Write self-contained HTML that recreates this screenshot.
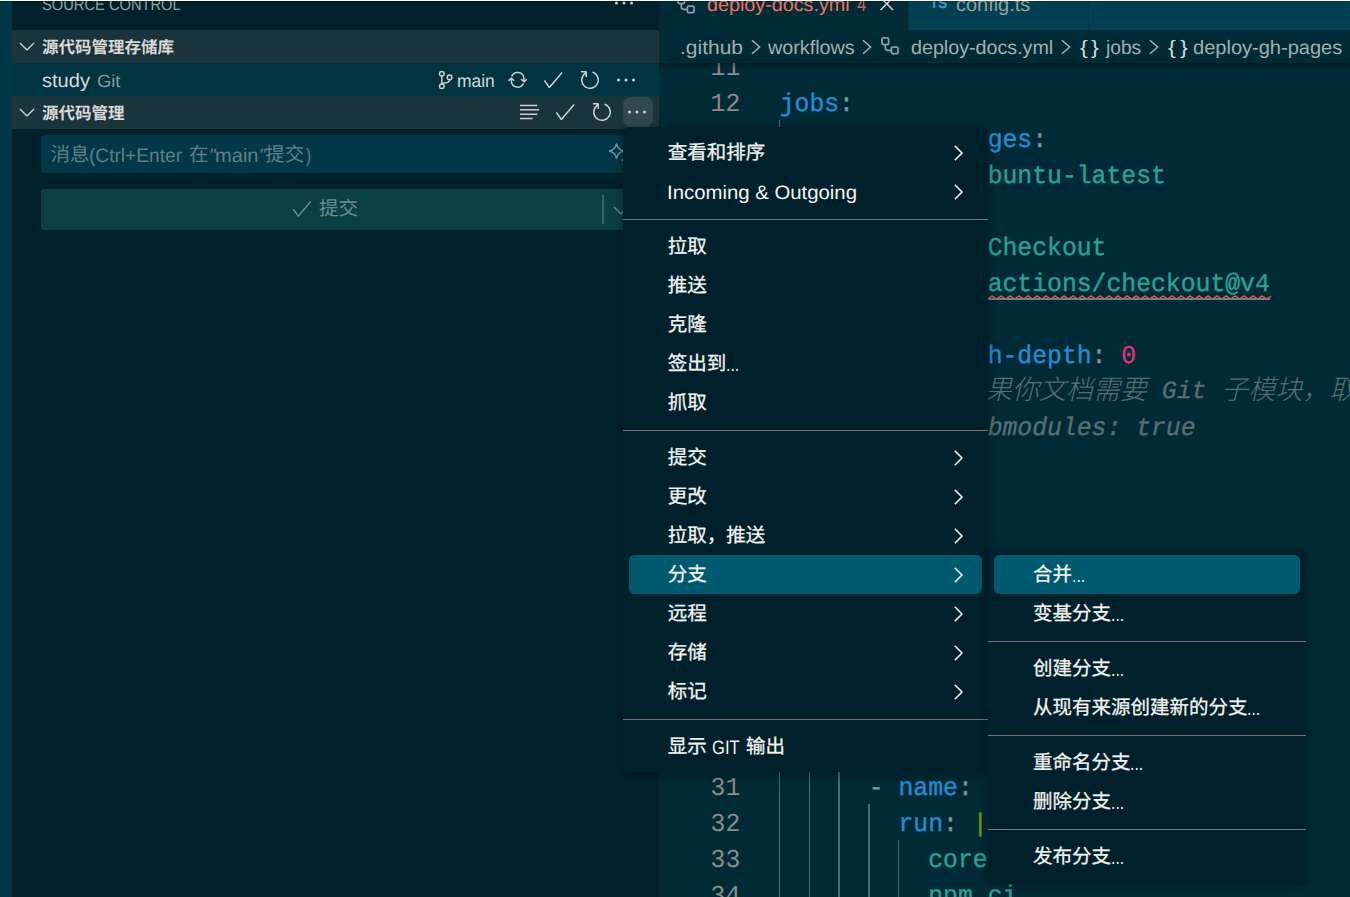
<!DOCTYPE html>
<html lang="zh-CN"><head><meta charset="utf-8"><title>Source Control - Visual Studio Code</title>
<style>
html,body{margin:0;padding:0}
body{width:1350px;height:897px;overflow:hidden;position:relative;background:#002B36;font-family:"Liberation Sans",sans-serif;font-kerning:none;font-variant-ligatures:none;text-rendering:geometricPrecision}
.b,.t,.i,.k{position:absolute}
.t{white-space:pre;line-height:1;transform-origin:0 0}
.i,.k{overflow:visible}
</style></head><body>
<div class="b" style="left:0px;top:0px;width:12px;height:897px;background:#003847;"></div>
<div class="b" style="left:12px;top:0px;width:647px;height:897px;background:#00212B;"></div>
<div class="b" style="left:659px;top:0px;width:691px;height:897px;background:#002B36;"></div>
<div class="b" style="left:778.9px;top:120px;width:1.6px;height:828px;background:#4E6B70;"></div>
<div class="b" style="left:808.6px;top:156px;width:1.6px;height:792px;background:#4E6B70;"></div>
<div class="b" style="left:838.3px;top:228px;width:1.6px;height:720px;background:#4E6B70;"></div>
<div class="b" style="left:868.0px;top:264px;width:1.6px;height:180px;background:#4E6B70;"></div>
<div class="b" style="left:897.7px;top:336px;width:1.6px;height:108px;background:#4E6B70;"></div>
<div class="b" style="left:868.0px;top:804px;width:1.6px;height:144px;background:#4E6B70;"></div>
<div class="b" style="left:897.7px;top:840px;width:1.6px;height:108px;background:#4E6B70;"></div>
<span class="t" style="left:710.59px;top:56.00px;font-size:24.75px;font-family:'Liberation Mono',sans-serif;color:#8A8A8A;transform:scale(1.0000,1.0450);">11</span>
<span class="t" style="left:710.59px;top:92.00px;font-size:24.75px;font-family:'Liberation Mono',sans-serif;color:#8A8A8A;transform:scale(1.0000,1.0450);">12</span>
<span class="t" style="left:710.59px;top:776.00px;font-size:24.75px;font-family:'Liberation Mono',sans-serif;color:#8A8A8A;transform:scale(1.0000,1.0450);">31</span>
<span class="t" style="left:710.59px;top:812.00px;font-size:24.75px;font-family:'Liberation Mono',sans-serif;color:#8A8A8A;transform:scale(1.0000,1.0450);">32</span>
<span class="t" style="left:710.59px;top:848.00px;font-size:24.75px;font-family:'Liberation Mono',sans-serif;color:#8A8A8A;transform:scale(1.0000,1.0450);">33</span>
<span class="t" style="left:710.59px;top:884.00px;font-size:24.75px;font-family:'Liberation Mono',sans-serif;color:#8A8A8A;transform:scale(1.0000,1.0450);">34</span>
<span class="t" style="left:779.70px;top:92.00px;font-size:24.75px;font-family:'Liberation Mono',sans-serif;color:#268BD2;transform:scale(1.0000,1.0350);-webkit-text-stroke:0.35px #268BD2;">jobs</span>
<span class="t" style="left:839.11px;top:92.00px;font-size:24.75px;font-family:'Liberation Mono',sans-serif;color:#839496;transform:scale(1.0000,1.0350);-webkit-text-stroke:0.35px #839496;">:</span>
<span class="t" style="left:809.41px;top:128.00px;font-size:24.75px;font-family:'Liberation Mono',sans-serif;color:#268BD2;transform:scale(1.0000,1.0350);-webkit-text-stroke:0.35px #268BD2;">deploy-gh-pages</span>
<span class="t" style="left:1032.20px;top:128.00px;font-size:24.75px;font-family:'Liberation Mono',sans-serif;color:#839496;transform:scale(1.0000,1.0350);-webkit-text-stroke:0.35px #839496;">:</span>
<span class="t" style="left:839.11px;top:164.00px;font-size:24.75px;font-family:'Liberation Mono',sans-serif;color:#268BD2;transform:scale(1.0000,1.0350);-webkit-text-stroke:0.35px #268BD2;">runs-on</span>
<span class="t" style="left:943.08px;top:164.00px;font-size:24.75px;font-family:'Liberation Mono',sans-serif;color:#839496;transform:scale(1.0000,1.0350);-webkit-text-stroke:0.35px #839496;">:</span>
<span class="t" style="left:972.79px;top:164.00px;font-size:24.75px;font-family:'Liberation Mono',sans-serif;color:#2AA198;transform:scale(1.0000,1.0350);-webkit-text-stroke:0.35px #2AA198;">ubuntu-latest</span>
<span class="t" style="left:868.82px;top:236.00px;font-size:24.75px;font-family:'Liberation Mono',sans-serif;color:#839496;transform:scale(1.0000,1.0350);-webkit-text-stroke:0.35px #839496;">-</span>
<span class="t" style="left:898.52px;top:236.00px;font-size:24.75px;font-family:'Liberation Mono',sans-serif;color:#268BD2;transform:scale(1.0000,1.0350);-webkit-text-stroke:0.35px #268BD2;">name</span>
<span class="t" style="left:957.94px;top:236.00px;font-size:24.75px;font-family:'Liberation Mono',sans-serif;color:#839496;transform:scale(1.0000,1.0350);-webkit-text-stroke:0.35px #839496;">:</span>
<span class="t" style="left:987.64px;top:236.00px;font-size:24.75px;font-family:'Liberation Mono',sans-serif;color:#2AA198;transform:scale(1.0000,1.0350);-webkit-text-stroke:0.35px #2AA198;">Checkout</span>
<span class="t" style="left:898.52px;top:272.00px;font-size:24.75px;font-family:'Liberation Mono',sans-serif;color:#268BD2;transform:scale(1.0000,1.0350);-webkit-text-stroke:0.35px #268BD2;">uses</span>
<span class="t" style="left:957.94px;top:272.00px;font-size:24.75px;font-family:'Liberation Mono',sans-serif;color:#839496;transform:scale(1.0000,1.0350);-webkit-text-stroke:0.35px #839496;">:</span>
<span class="t" style="left:987.64px;top:272.00px;font-size:24.75px;font-family:'Liberation Mono',sans-serif;color:#2AA198;transform:scale(1.0000,1.0350);-webkit-text-stroke:0.35px #2AA198;">actions/checkout@v4</span>
<span class="t" style="left:898.52px;top:308.00px;font-size:24.75px;font-family:'Liberation Mono',sans-serif;color:#268BD2;transform:scale(1.0000,1.0350);-webkit-text-stroke:0.35px #268BD2;">with</span>
<span class="t" style="left:957.94px;top:308.00px;font-size:24.75px;font-family:'Liberation Mono',sans-serif;color:#839496;transform:scale(1.0000,1.0350);-webkit-text-stroke:0.35px #839496;">:</span>
<span class="t" style="left:928.23px;top:344.00px;font-size:24.75px;font-family:'Liberation Mono',sans-serif;color:#268BD2;transform:scale(1.0000,1.0350);-webkit-text-stroke:0.35px #268BD2;">fetch-depth</span>
<span class="t" style="left:1091.61px;top:344.00px;font-size:24.75px;font-family:'Liberation Mono',sans-serif;color:#839496;transform:scale(1.0000,1.0350);-webkit-text-stroke:0.35px #839496;">:</span>
<span class="t" style="left:1121.32px;top:344.00px;font-size:24.75px;font-family:'Liberation Mono',sans-serif;color:#D33682;transform:scale(1.0000,1.0350);-webkit-text-stroke:0.35px #D33682;">0</span>
<span class="t" style="left:928.23px;top:380.00px;font-size:24.75px;font-family:'Liberation Mono',sans-serif;color:#586E75;transform:scale(1.0000,1.0350);font-style:italic;-webkit-text-stroke:0.35px #586E75;">#</span>
<span class="t" style="left:957.94px;top:377.10px;font-size:27px;font-family:'Liberation Sans','Noto Sans CJK SC',sans-serif;font-weight:300;font-style:italic;color:#586E75;">如果你文档需要</span>
<span class="t" style="left:1161.79px;top:380.00px;font-size:24.75px;font-family:'Liberation Mono',sans-serif;color:#586E75;transform:scaleX(1.0000);font-style:italic;-webkit-text-stroke:0.35px #586E75;">Git</span>
<span class="t" style="left:1221.20px;top:377.10px;font-size:27px;font-family:'Liberation Sans','Noto Sans CJK SC',sans-serif;font-weight:300;font-style:italic;color:#586E75;">子模块，取</span>
<span class="t" style="left:928.23px;top:416.00px;font-size:24.75px;font-family:'Liberation Mono',sans-serif;color:#586E75;transform:scale(1.0000,1.0350);font-style:italic;-webkit-text-stroke:0.35px #586E75;"># submodules: true</span>
<span class="t" style="left:868.82px;top:776.00px;font-size:24.75px;font-family:'Liberation Mono',sans-serif;color:#839496;transform:scale(1.0000,1.0350);-webkit-text-stroke:0.35px #839496;">-</span>
<span class="t" style="left:898.52px;top:776.00px;font-size:24.75px;font-family:'Liberation Mono',sans-serif;color:#268BD2;transform:scale(1.0000,1.0350);-webkit-text-stroke:0.35px #268BD2;">name</span>
<span class="t" style="left:957.94px;top:776.00px;font-size:24.75px;font-family:'Liberation Mono',sans-serif;color:#839496;transform:scale(1.0000,1.0350);-webkit-text-stroke:0.35px #839496;">:</span>
<span class="t" style="left:898.52px;top:812.00px;font-size:24.75px;font-family:'Liberation Mono',sans-serif;color:#268BD2;transform:scale(1.0000,1.0350);-webkit-text-stroke:0.35px #268BD2;">run</span>
<span class="t" style="left:943.08px;top:812.00px;font-size:24.75px;font-family:'Liberation Mono',sans-serif;color:#839496;transform:scale(1.0000,1.0350);-webkit-text-stroke:0.35px #839496;">:</span>
<span class="t" style="left:972.79px;top:812.00px;font-size:24.75px;font-family:'Liberation Mono',sans-serif;color:#859900;transform:scale(1.0000,1.0350);-webkit-text-stroke:0.35px #859900;">|</span>
<span class="t" style="left:928.23px;top:848.00px;font-size:24.75px;font-family:'Liberation Mono',sans-serif;color:#2AA198;transform:scale(1.0000,1.0350);-webkit-text-stroke:0.35px #2AA198;">corepack enable</span>
<span class="t" style="left:928.23px;top:884.00px;font-size:24.75px;font-family:'Liberation Mono',sans-serif;color:#2AA198;transform:scale(1.0000,1.0350);-webkit-text-stroke:0.35px #2AA198;">npm ci</span>
<div class="b" style="left:987.6px;top:298.2px;width:282.2px;height:1.6px;background:#2AA198;"></div>
<svg class="i" style="left:0;top:0;width:1350px;height:897px" viewBox="0 0 1350 897"><path d="M987.6 299 L992.1 296 L996.6 299 L1001.1 296 L1005.6 299 L1010.1 296 L1014.6 299 L1019.1 296 L1023.6 299 L1028.1 296 L1032.6 299 L1037.1 296 L1041.6 299 L1046.1 296 L1050.6 299 L1055.1 296 L1059.6 299 L1064.1 296 L1068.6 299 L1073.1 296 L1077.6 299 L1082.1 296 L1086.6 299 L1091.1 296 L1095.6 299 L1100.1 296 L1104.6 299 L1109.1 296 L1113.6 299 L1118.1 296 L1122.6 299 L1127.1 296 L1131.6 299 L1136.1 296 L1140.6 299 L1145.1 296 L1149.6 299 L1154.1 296 L1158.6 299 L1163.1 296 L1167.6 299 L1172.1 296 L1176.6 299 L1181.1 296 L1185.6 299 L1190.1 296 L1194.6 299 L1199.1 296 L1203.6 299 L1208.1 296 L1212.6 299 L1217.1 296 L1221.6 299 L1226.1 296 L1230.6 299 L1235.1 296 L1239.6 299 L1244.1 296 L1248.6 299 L1253.1 296 L1257.6 299 L1262.1 296 L1266.6 299 L1271.1 296" fill="none" stroke="#F2484C" stroke-width="1.5"/></svg>
<div class="b" style="left:659px;top:0px;width:691px;height:30px;background:#004052;"></div>
<div class="b" style="left:659px;top:0px;width:249px;height:30px;background:#002B37;"></div>
<div class="b" style="left:908px;top:0px;width:1px;height:30px;background:#003847;"></div>
<div class="b" style="left:1088px;top:0px;width:1px;height:30px;background:#003847;"></div>
<div class="b" style="left:659px;top:30px;width:691px;height:33px;background:#002B36;"></div>
<div class="b" style="left:659px;top:63px;width:691px;height:7px;background:linear-gradient(rgba(0,0,0,.38),rgba(0,0,0,0));"></div>
<svg class="i" style="left:677.1px;top:-4.0px;width:18px;height:18px;" viewBox="0 0 18 18"><g fill="none" stroke="#8E9CA8" stroke-width="1.75"><rect x="1" y="0.9" width="6.6" height="6.6" rx="1.4"/><rect x="10.4" y="10" width="6.6" height="6.6" rx="1.4"/><path d="M4.3 7.5v3.6a2.2 2.2 0 0 0 2.2 2.2h3.9"/></g></svg>
<span class="t" style="left:706.97px;top:-4.00px;font-size:19.5px;font-family:'Liberation Sans',sans-serif;color:#F0705F;transform:scaleX(1.0125);">deploy-docs.yml</span>
<span class="t" style="left:857.02px;top:-4.00px;font-size:19.5px;font-family:'Liberation Sans',sans-serif;color:#C9665B;transform:scaleX(0.8447);">4</span>
<svg class="i" style="left:879.3px;top:-3.6px;width:16px;height:16px;" viewBox="0 0 16 16"><path d="M1.6 1.6L14 14M14 1.6L1.6 14" stroke="#D6DBDB" stroke-width="1.5" fill="none"/></svg>
<span class="t" style="left:929.95px;top:-3.00px;font-size:14.5px;font-family:'Liberation Sans',sans-serif;font-weight:700;color:#4A97C6;transform:scaleX(0.9270);">TS</span>
<span class="t" style="left:956.45px;top:-4.00px;font-size:19.5px;font-family:'Liberation Sans',sans-serif;color:#93A1A1;transform:scaleX(1.0227);">config.ts</span>
<span class="t" style="left:680.48px;top:39.00px;font-size:19.5px;font-family:'Liberation Sans',sans-serif;color:#A3AFAF;transform:scaleX(1.0760);">.github</span>
<svg class="i" style="left:751px;top:38.5px;width:10px;height:16px;" viewBox="0 0 10 16"><path d="M1 1.2L8.6 8 1 14.8" fill="none" stroke="#A3AFAF" stroke-width="1.5"/></svg>
<span class="t" style="left:767.53px;top:39.00px;font-size:19.5px;font-family:'Liberation Sans',sans-serif;color:#A3AFAF;transform:scaleX(1.0127);">workflows</span>
<svg class="i" style="left:862px;top:38.5px;width:10px;height:16px;" viewBox="0 0 10 16"><path d="M1 1.2L8.6 8 1 14.8" fill="none" stroke="#A3AFAF" stroke-width="1.5"/></svg>
<svg class="i" style="left:880.8px;top:37px;width:18px;height:18px;" viewBox="0 0 18 18"><g fill="none" stroke="#8E9CA8" stroke-width="1.75"><rect x="1" y="0.9" width="6.6" height="6.6" rx="1.4"/><rect x="10.4" y="10" width="6.6" height="6.6" rx="1.4"/><path d="M4.3 7.5v3.6a2.2 2.2 0 0 0 2.2 2.2h3.9"/></g></svg>
<span class="t" style="left:910.77px;top:39.00px;font-size:19.5px;font-family:'Liberation Sans',sans-serif;color:#A3AFAF;transform:scaleX(1.0096);">deploy-docs.yml</span>
<svg class="i" style="left:1061px;top:38.5px;width:10px;height:16px;" viewBox="0 0 10 16"><path d="M1 1.2L8.6 8 1 14.8" fill="none" stroke="#A3AFAF" stroke-width="1.5"/></svg>
<span class="t" style="left:1079.91px;top:39.00px;font-size:19.5px;font-family:'Liberation Sans',sans-serif;color:#D6D6D6;transform:scaleX(1.1974);">{</span>
<span class="t" style="left:1091.41px;top:39.00px;font-size:19.5px;font-family:'Liberation Sans',sans-serif;color:#D6D6D6;transform:scaleX(1.1993);">}</span>
<span class="t" style="left:1106.17px;top:39.00px;font-size:19.5px;font-family:'Liberation Sans',sans-serif;color:#A3AFAF;transform:scaleX(0.9847);">jobs</span>
<svg class="i" style="left:1149px;top:38.5px;width:10px;height:16px;" viewBox="0 0 10 16"><path d="M1 1.2L8.6 8 1 14.8" fill="none" stroke="#A3AFAF" stroke-width="1.5"/></svg>
<span class="t" style="left:1168.11px;top:39.00px;font-size:19.5px;font-family:'Liberation Sans',sans-serif;color:#D6D6D6;transform:scaleX(1.1974);">{</span>
<span class="t" style="left:1179.61px;top:39.00px;font-size:19.5px;font-family:'Liberation Sans',sans-serif;color:#D6D6D6;transform:scaleX(1.1993);">}</span>
<span class="t" style="left:1193.16px;top:39.00px;font-size:19.5px;font-family:'Liberation Sans',sans-serif;color:#A3AFAF;transform:scaleX(1.0275);">deploy-gh-pages</span>
<span class="t" style="left:41.93px;top:-3.00px;font-size:16.5px;font-family:'Liberation Sans',sans-serif;color:#93A1A1;transform:scaleX(0.8897);">SOURCE CONTROL</span>
<svg class="i" style="left:612.3px;top:-9.0px;width:24.0px;height:24.0px;" viewBox="0 0 16 16"><path fill="#CFCFCF" d="M4 8a1 1 0 1 1-2 0 1 1 0 0 1 2 0zm5 0a1 1 0 1 1-2 0 1 1 0 0 1 2 0zm5 0a1 1 0 1 1-2 0 1 1 0 0 1 2 0z"/></svg>
<div class="b" style="left:12px;top:30px;width:647px;height:33px;background:#1A343C;"></div>
<svg class="i" style="left:15px;top:33.6px;width:24.0px;height:24.0px;" viewBox="0 0 16 16"><path fill="#CFCFCF" d="M7.976 10.072l4.357-4.357.62.618L8.284 11h-.618L3 6.333l.619-.618 4.357 4.357z"/></svg>
<span class="t" style="left:42.00px;top:39.80px;font-size:16.5px;font-family:'Liberation Sans','Noto Sans CJK SC',sans-serif;font-weight:700;color:#D8D8D8;">源代码管理存储库</span>
<div class="b" style="left:12px;top:63px;width:647px;height:33px;background:#003441;"></div>
<span class="t" style="left:41.74px;top:72.00px;font-size:19.5px;font-family:'Liberation Sans',sans-serif;color:#D8D8D8;transform:scaleX(1.0298);">study</span>
<span class="t" style="left:96.78px;top:73.00px;font-size:17.5px;font-family:'Liberation Sans',sans-serif;color:#8A9A9C;transform:scaleX(1.0490);">Git</span>
<svg class="i" style="left:437px;top:70px;width:17px;height:20px;" viewBox="0 0 17 20"><g fill="none" stroke="#CFCFCF" stroke-width="1.5"><circle cx="4.8" cy="3.8" r="2.3"/><circle cx="4.8" cy="16.2" r="2.3"/><circle cx="12.6" cy="7.4" r="2.3"/><path d="M4.8 6.1v7.8"/><path d="M12.6 9.7c0 2.6-2.4 3-5 3.2-1.6.1-2.8.5-2.8 1.4"/></g></svg>
<span class="t" style="left:456.94px;top:72.00px;font-size:18px;font-family:'Liberation Sans',sans-serif;color:#D8D8D8;transform:scaleX(0.9686);">main</span>
<svg class="i" style="left:507px;top:71px;width:22px;height:18px;" viewBox="0 0 22 18"><g fill="none" stroke="#CFCFCF" stroke-width="1.45" stroke-linejoin="miter"><path d="M4.7 5.6A6.3 6.3 0 0 1 16.9 7.6L17.2 10.4"/><path d="M14 8.1L17.2 10.7 19.8 8.3"/><path d="M16.5 12.3A6.3 6.3 0 0 1 4.4 10.2L4.4 7.4"/><path d="M1.4 9.7L4.4 7.1 7.2 9.7"/></g></svg>
<svg class="i" style="left:541.0px;top:67.8px;width:24.0px;height:24.0px;" viewBox="0 0 16 16"><path fill="#CFCFCF" d="M14.431 3.323l-8.47 10-.79-.036-3.35-4.77.818-.574 2.978 4.24 8.051-9.506.764.646z"/></svg>
<svg class="i" style="left:577.5px;top:68px;width:24.0px;height:24.0px;" viewBox="0 0 16 16"><path fill="#CFCFCF" d="M4.681 3H2V2h3.5l.5.5V6H5V4a5 5 0 1 0 4.53-.761l.302-.954A6 6 0 1 1 4.681 3z"/></svg>
<svg class="i" style="left:613.6px;top:67.9px;width:24.0px;height:24.0px;" viewBox="0 0 16 16"><path fill="#CFCFCF" d="M4 8a1 1 0 1 1-2 0 1 1 0 0 1 2 0zm5 0a1 1 0 1 1-2 0 1 1 0 0 1 2 0zm5 0a1 1 0 1 1-2 0 1 1 0 0 1 2 0z"/></svg>
<div class="b" style="left:12px;top:96px;width:647px;height:33px;background:#1A343C;"></div>
<svg class="i" style="left:15px;top:99.6px;width:24.0px;height:24.0px;" viewBox="0 0 16 16"><path fill="#CFCFCF" d="M7.976 10.072l4.357-4.357.62.618L8.284 11h-.618L3 6.333l.619-.618 4.357 4.357z"/></svg>
<span class="t" style="left:42.00px;top:105.80px;font-size:16.5px;font-family:'Liberation Sans','Noto Sans CJK SC',sans-serif;font-weight:700;color:#D8D8D8;">源代码管理</span>
<svg class="i" style="left:519px;top:103px;width:21px;height:18px;" viewBox="0 0 21 18"><g stroke="#CFCFCF" stroke-width="1.5"><path d="M1 2.4h17.2M1 6.8h19M1 11.2h17.2M1 15.6h12.6"/></g></svg>
<svg class="i" style="left:553.1px;top:99.8px;width:24.0px;height:24.0px;" viewBox="0 0 16 16"><path fill="#CFCFCF" d="M14.431 3.323l-8.47 10-.79-.036-3.35-4.77.818-.574 2.978 4.24 8.051-9.506.764.646z"/></svg>
<svg class="i" style="left:589.9px;top:100px;width:24.0px;height:24.0px;" viewBox="0 0 16 16"><path fill="#CFCFCF" d="M4.681 3H2V2h3.5l.5.5V6H5V4a5 5 0 1 0 4.53-.761l.302-.954A6 6 0 1 1 4.681 3z"/></svg>
<div class="b" style="left:623px;top:97px;width:30px;height:30px;background:#30474E;border-radius:7.5px;"></div>
<svg class="i" style="left:625.2px;top:100.0px;width:24.0px;height:24.0px;" viewBox="0 0 16 16"><path fill="#CFCFCF" d="M4 8a1 1 0 1 1-2 0 1 1 0 0 1 2 0zm5 0a1 1 0 1 1-2 0 1 1 0 0 1 2 0zm5 0a1 1 0 1 1-2 0 1 1 0 0 1 2 0z"/></svg>
<div class="b" style="left:41px;top:135px;width:600px;height:38px;background:#003847;border-radius:3px;"></div>
<span class="t" style="left:50.40px;top:145.90px;font-size:19.5px;font-family:'Liberation Sans','Noto Sans CJK SC',sans-serif;color:#627E83;">消息</span>
<span class="t" style="left:89.41px;top:147.00px;font-size:19.5px;font-family:'Liberation Sans',sans-serif;color:#627E83;transform:scaleX(0.9809);">(Ctrl+Enter</span>
<span class="t" style="left:189.00px;top:145.90px;font-size:19.5px;font-family:'Liberation Sans','Noto Sans CJK SC',sans-serif;color:#627E83;">在</span>
<span class="t" style="left:209.01px;top:147.00px;font-size:19.5px;font-family:'Liberation Sans',sans-serif;color:#627E83;transform:scaleX(0.9496);font-style:italic;">"</span>
<span class="t" style="left:215.17px;top:147.00px;font-size:19.5px;font-family:'Liberation Sans',sans-serif;color:#627E83;transform:scaleX(1.0301);">main</span>
<span class="t" style="left:258.61px;top:147.00px;font-size:19.5px;font-family:'Liberation Sans',sans-serif;color:#627E83;transform:scaleX(0.9496);font-style:italic;">"</span>
<span class="t" style="left:265.30px;top:145.90px;font-size:19.5px;font-family:'Liberation Sans','Noto Sans CJK SC',sans-serif;color:#627E83;">提交</span>
<span class="t" style="left:305.51px;top:147.00px;font-size:19.5px;font-family:'Liberation Sans',sans-serif;color:#627E83;transform:scaleX(0.7737);">)</span>
<svg class="i" style="left:607px;top:142px;width:20px;height:22px;" viewBox="0 0 20 22"><g fill="none" stroke="#7C979C" stroke-width="1.4"><path d="M9.5 1.4c.7 4.4 2.3 6.6 7.4 7.6-5.100 1-6.700 3.200-7.400 7.600-.7-4.400-2.300-6.600-7.400-7.600 5.100-1 6.700-3.200 7.400-7.600z"/><path fill="#7C979C" stroke="none" d="M16.2 15.600c.3 1.500.8 2.100 2.400 2.400-1.600.3-2.100.9-2.400 2.400-.3-1.500-.8-2.100-2.400-2.400 1.600-.3 2.100-.9 2.400-2.400z"/></g></svg>
<div class="b" style="left:41px;top:189px;width:600px;height:41px;background:#0A4045;border-radius:3px;"></div>
<svg class="i" style="left:290px;top:197.3px;width:23.6px;height:23.6px;" viewBox="0 0 16 16"><path fill="#6A8B90" d="M14.431 3.323l-8.47 10-.79-.036-3.35-4.77.818-.574 2.978 4.24 8.051-9.506.764.646z"/></svg>
<span class="t" style="left:319.00px;top:200.00px;font-size:19.5px;font-family:'Liberation Sans','Noto Sans CJK SC',sans-serif;color:#6A8B90;">提交</span>
<div class="b" style="left:602.4px;top:195px;width:1.4px;height:29px;background:#3A6166;"></div>
<svg class="i" style="left:609px;top:198px;width:24.0px;height:24.0px;" viewBox="0 0 16 16"><path fill="#6A8B90" d="M7.976 10.072l4.357-4.357.62.618L8.284 11h-.618L3 6.333l.619-.618 4.357 4.357z"/></svg>
<div class="b" style="left:623px;top:127px;width:365px;height:645px;background:#00212B;box-shadow:0 3px 12px rgba(0,0,0,.36);border-radius:7px;"></div>
<span class="t" style="left:667.70px;top:144.00px;font-size:19.5px;font-family:'Liberation Sans','Noto Sans CJK SC',sans-serif;color:#F4F4F4;-webkit-text-stroke:0.27px #F4F4F4;">查看和排序</span>
<svg class="i" style="left:946.0px;top:141.0px;width:24.0px;height:24.0px;stroke:#F4F4F4;stroke-width:.22;" viewBox="0 0 16 16"><path fill="#F4F4F4" d="M10.072 8.024L5.715 3.667l.618-.62L11 7.716v.618L6.333 13l-.618-.619 4.357-4.357z"/></svg>
<span class="t" style="left:667.42px;top:184.00px;font-size:19.5px;font-family:'Liberation Sans',sans-serif;color:#F4F4F4;transform:scaleX(1.0433);">Incoming &amp; Outgoing</span>
<svg class="i" style="left:946.0px;top:180.0px;width:24.0px;height:24.0px;stroke:#F4F4F4;stroke-width:.22;" viewBox="0 0 16 16"><path fill="#F4F4F4" d="M10.072 8.024L5.715 3.667l.618-.62L11 7.716v.618L6.333 13l-.618-.619 4.357-4.357z"/></svg>
<div class="b" style="left:623px;top:219px;width:365px;height:1px;background:#757575;"></div>
<span class="t" style="left:667.70px;top:238.00px;font-size:19.5px;font-family:'Liberation Sans','Noto Sans CJK SC',sans-serif;color:#F4F4F4;-webkit-text-stroke:0.27px #F4F4F4;">拉取</span>
<span class="t" style="left:667.70px;top:277.00px;font-size:19.5px;font-family:'Liberation Sans','Noto Sans CJK SC',sans-serif;color:#F4F4F4;-webkit-text-stroke:0.27px #F4F4F4;">推送</span>
<span class="t" style="left:667.70px;top:316.00px;font-size:19.5px;font-family:'Liberation Sans','Noto Sans CJK SC',sans-serif;color:#F4F4F4;-webkit-text-stroke:0.27px #F4F4F4;">克隆</span>
<span class="t" style="left:667.70px;top:355.00px;font-size:19.5px;font-family:'Liberation Sans','Noto Sans CJK SC',sans-serif;color:#F4F4F4;-webkit-text-stroke:0.27px #F4F4F4;">签出到</span>
<span class="t" style="left:726.06px;top:356.00px;font-size:19.5px;font-family:'Liberation Sans',sans-serif;color:#F4F4F4;transform:scaleX(0.8115);">...</span>
<span class="t" style="left:667.70px;top:394.00px;font-size:19.5px;font-family:'Liberation Sans','Noto Sans CJK SC',sans-serif;color:#F4F4F4;-webkit-text-stroke:0.27px #F4F4F4;">抓取</span>
<div class="b" style="left:623px;top:430px;width:365px;height:1px;background:#757575;"></div>
<span class="t" style="left:667.70px;top:449.00px;font-size:19.5px;font-family:'Liberation Sans','Noto Sans CJK SC',sans-serif;color:#F4F4F4;-webkit-text-stroke:0.27px #F4F4F4;">提交</span>
<svg class="i" style="left:946.0px;top:446.0px;width:24.0px;height:24.0px;stroke:#F4F4F4;stroke-width:.22;" viewBox="0 0 16 16"><path fill="#F4F4F4" d="M10.072 8.024L5.715 3.667l.618-.62L11 7.716v.618L6.333 13l-.618-.619 4.357-4.357z"/></svg>
<span class="t" style="left:667.70px;top:488.00px;font-size:19.5px;font-family:'Liberation Sans','Noto Sans CJK SC',sans-serif;color:#F4F4F4;-webkit-text-stroke:0.27px #F4F4F4;">更改</span>
<svg class="i" style="left:946.0px;top:485.0px;width:24.0px;height:24.0px;stroke:#F4F4F4;stroke-width:.22;" viewBox="0 0 16 16"><path fill="#F4F4F4" d="M10.072 8.024L5.715 3.667l.618-.62L11 7.716v.618L6.333 13l-.618-.619 4.357-4.357z"/></svg>
<span class="t" style="left:667.70px;top:527.00px;font-size:19.5px;font-family:'Liberation Sans','Noto Sans CJK SC',sans-serif;color:#F4F4F4;-webkit-text-stroke:0.27px #F4F4F4;">拉取，推送</span>
<svg class="i" style="left:946.0px;top:524.0px;width:24.0px;height:24.0px;stroke:#F4F4F4;stroke-width:.22;" viewBox="0 0 16 16"><path fill="#F4F4F4" d="M10.072 8.024L5.715 3.667l.618-.62L11 7.716v.618L6.333 13l-.618-.619 4.357-4.357z"/></svg>
<div class="b" style="left:629px;top:555px;width:353px;height:39px;background:#005A6F;border-radius:5.5px;"></div>
<span class="t" style="left:667.70px;top:566.00px;font-size:19.5px;font-family:'Liberation Sans','Noto Sans CJK SC',sans-serif;color:#F4F4F4;-webkit-text-stroke:0.27px #F4F4F4;">分支</span>
<svg class="i" style="left:946.0px;top:563.0px;width:24.0px;height:24.0px;stroke:#F4F4F4;stroke-width:.22;" viewBox="0 0 16 16"><path fill="#F4F4F4" d="M10.072 8.024L5.715 3.667l.618-.62L11 7.716v.618L6.333 13l-.618-.619 4.357-4.357z"/></svg>
<span class="t" style="left:667.70px;top:605.00px;font-size:19.5px;font-family:'Liberation Sans','Noto Sans CJK SC',sans-serif;color:#F4F4F4;-webkit-text-stroke:0.27px #F4F4F4;">远程</span>
<svg class="i" style="left:946.0px;top:602.0px;width:24.0px;height:24.0px;stroke:#F4F4F4;stroke-width:.22;" viewBox="0 0 16 16"><path fill="#F4F4F4" d="M10.072 8.024L5.715 3.667l.618-.62L11 7.716v.618L6.333 13l-.618-.619 4.357-4.357z"/></svg>
<span class="t" style="left:667.70px;top:644.00px;font-size:19.5px;font-family:'Liberation Sans','Noto Sans CJK SC',sans-serif;color:#F4F4F4;-webkit-text-stroke:0.27px #F4F4F4;">存储</span>
<svg class="i" style="left:946.0px;top:641.0px;width:24.0px;height:24.0px;stroke:#F4F4F4;stroke-width:.22;" viewBox="0 0 16 16"><path fill="#F4F4F4" d="M10.072 8.024L5.715 3.667l.618-.62L11 7.716v.618L6.333 13l-.618-.619 4.357-4.357z"/></svg>
<span class="t" style="left:667.70px;top:683.00px;font-size:19.5px;font-family:'Liberation Sans','Noto Sans CJK SC',sans-serif;color:#F4F4F4;-webkit-text-stroke:0.27px #F4F4F4;">标记</span>
<svg class="i" style="left:946.0px;top:680.0px;width:24.0px;height:24.0px;stroke:#F4F4F4;stroke-width:.22;" viewBox="0 0 16 16"><path fill="#F4F4F4" d="M10.072 8.024L5.715 3.667l.618-.62L11 7.716v.618L6.333 13l-.618-.619 4.357-4.357z"/></svg>
<div class="b" style="left:623px;top:719px;width:365px;height:1px;background:#757575;"></div>
<span class="t" style="left:667.70px;top:738.00px;font-size:19.5px;font-family:'Liberation Sans','Noto Sans CJK SC',sans-serif;color:#F4F4F4;-webkit-text-stroke:0.27px #F4F4F4;">显示</span>
<span class="t" style="left:712.37px;top:739.00px;font-size:19.5px;font-family:'Liberation Sans',sans-serif;color:#F4F4F4;transform:scaleX(0.8497);">GIT</span>
<span class="t" style="left:745.90px;top:738.00px;font-size:19.5px;font-family:'Liberation Sans','Noto Sans CJK SC',sans-serif;color:#F4F4F4;-webkit-text-stroke:0.27px #F4F4F4;">输出</span>
<div class="b" style="left:988.4px;top:549px;width:318px;height:333px;background:#00212B;box-shadow:0 3px 12px rgba(0,0,0,.36);border-radius:7px;"></div>
<div class="b" style="left:994.4px;top:555px;width:306px;height:39px;background:#005A6F;border-radius:5.5px;"></div>
<span class="t" style="left:1033.10px;top:566.00px;font-size:19.5px;font-family:'Liberation Sans','Noto Sans CJK SC',sans-serif;color:#F4F4F4;-webkit-text-stroke:0.27px #F4F4F4;">合并</span>
<span class="t" style="left:1071.96px;top:567.00px;font-size:19.5px;font-family:'Liberation Sans',sans-serif;color:#F4F4F4;transform:scaleX(0.8115);">...</span>
<span class="t" style="left:1033.10px;top:605.00px;font-size:19.5px;font-family:'Liberation Sans','Noto Sans CJK SC',sans-serif;color:#F4F4F4;-webkit-text-stroke:0.27px #F4F4F4;">变基分支</span>
<span class="t" style="left:1110.96px;top:606.00px;font-size:19.5px;font-family:'Liberation Sans',sans-serif;color:#F4F4F4;transform:scaleX(0.8115);">...</span>
<div class="b" style="left:988.4px;top:641px;width:318px;height:1px;background:#757575;"></div>
<span class="t" style="left:1033.10px;top:660.00px;font-size:19.5px;font-family:'Liberation Sans','Noto Sans CJK SC',sans-serif;color:#F4F4F4;-webkit-text-stroke:0.27px #F4F4F4;">创建分支</span>
<span class="t" style="left:1110.96px;top:661.00px;font-size:19.5px;font-family:'Liberation Sans',sans-serif;color:#F4F4F4;transform:scaleX(0.8115);">...</span>
<span class="t" style="left:1033.10px;top:699.00px;font-size:19.5px;font-family:'Liberation Sans','Noto Sans CJK SC',sans-serif;color:#F4F4F4;-webkit-text-stroke:0.27px #F4F4F4;">从现有来源创建新的分支</span>
<span class="t" style="left:1247.46px;top:700.00px;font-size:19.5px;font-family:'Liberation Sans',sans-serif;color:#F4F4F4;transform:scaleX(0.8115);">...</span>
<div class="b" style="left:988.4px;top:735px;width:318px;height:1px;background:#757575;"></div>
<span class="t" style="left:1033.10px;top:754.00px;font-size:19.5px;font-family:'Liberation Sans','Noto Sans CJK SC',sans-serif;color:#F4F4F4;-webkit-text-stroke:0.27px #F4F4F4;">重命名分支</span>
<span class="t" style="left:1130.46px;top:755.00px;font-size:19.5px;font-family:'Liberation Sans',sans-serif;color:#F4F4F4;transform:scaleX(0.8115);">...</span>
<span class="t" style="left:1033.10px;top:793.00px;font-size:19.5px;font-family:'Liberation Sans','Noto Sans CJK SC',sans-serif;color:#F4F4F4;-webkit-text-stroke:0.27px #F4F4F4;">删除分支</span>
<span class="t" style="left:1110.96px;top:794.00px;font-size:19.5px;font-family:'Liberation Sans',sans-serif;color:#F4F4F4;transform:scaleX(0.8115);">...</span>
<div class="b" style="left:988.4px;top:829px;width:318px;height:1px;background:#757575;"></div>
<span class="t" style="left:1033.10px;top:848.00px;font-size:19.5px;font-family:'Liberation Sans','Noto Sans CJK SC',sans-serif;color:#F4F4F4;-webkit-text-stroke:0.27px #F4F4F4;">发布分支</span>
<span class="t" style="left:1110.96px;top:849.00px;font-size:19.5px;font-family:'Liberation Sans',sans-serif;color:#F4F4F4;transform:scaleX(0.8115);">...</span>
<div class="b" style="left:0px;top:0px;width:1350px;height:1px;background:#FFFFFF;"></div>
<div class="b" style="left:0px;top:1px;width:1350px;height:1px;background:rgba(0,0,0,.2);"></div>
</body></html>
